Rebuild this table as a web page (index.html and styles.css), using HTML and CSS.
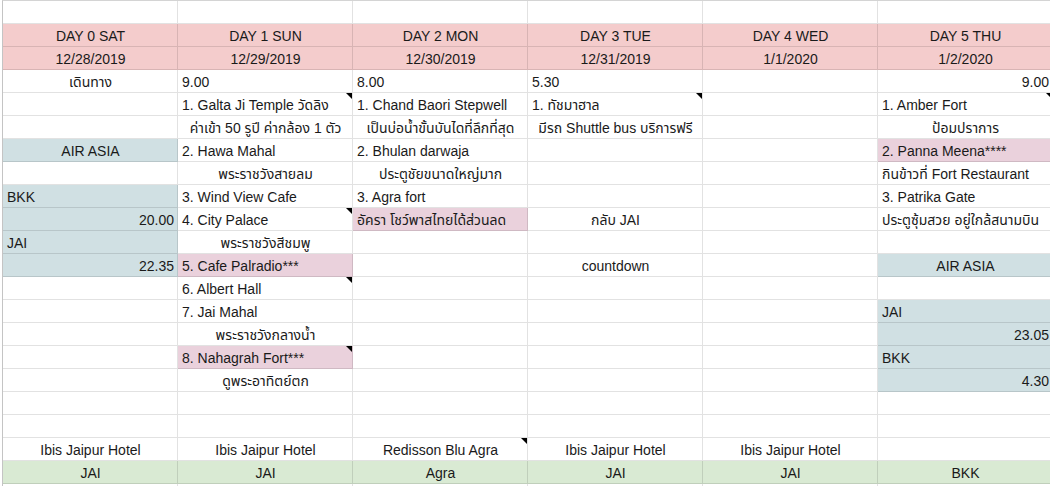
FILE: index.html
```html
<!DOCTYPE html>
<html lang="th">
<head>
<meta charset="utf-8">
<title>Trip plan</title>
<link rel="stylesheet" href="styles.css">
</head>
<body>
<div class="sheet">
  <!-- r0 -->
  <div class="c"></div><div class="c"></div><div class="c"></div><div class="c"></div><div class="c"></div><div class="c"></div>
  <!-- r1 -->
  <div class="c ctr pk">DAY 0 SAT</div><div class="c ctr pk">DAY 1 SUN</div><div class="c ctr pk">DAY 2 MON</div><div class="c ctr pk">DAY 3 TUE</div><div class="c ctr pk">DAY 4 WED</div><div class="c ctr pk">DAY 5 THU</div>
  <!-- r2 -->
  <div class="c ctr pk">12/28/2019</div><div class="c ctr pk">12/29/2019</div><div class="c ctr pk">12/30/2019</div><div class="c ctr pk">12/31/2019</div><div class="c ctr pk">1/1/2020</div><div class="c ctr pk">1/2/2020</div>
  <!-- r3 -->
  <div class="c ctr">เดินทาง</div><div class="c">9.00</div><div class="c">8.00</div><div class="c">5.30</div><div class="c"></div><div class="c r">9.00</div>
  <!-- r4 -->
  <div class="c"></div><div class="c cm">1. Galta Ji Temple วัดลิง</div><div class="c">1. Chand Baori Stepwell</div><div class="c cm">1. ทัชมาฮาล</div><div class="c"></div><div class="c cm">1. Amber Fort</div>
  <!-- r5 -->
  <div class="c"></div><div class="c ctr">ค่าเข้า 50 รูปี ค่ากล้อง 1 ตัว</div><div class="c ctr">เป็นบ่อน้ำขั้นบันไดที่ลึกที่สุด</div><div class="c ctr">มีรถ Shuttle bus บริการฟรี</div><div class="c"></div><div class="c ctr">ป้อมปราการ</div>
  <!-- r6 -->
  <div class="c ctr bl">AIR ASIA</div><div class="c">2. Hawa Mahal</div><div class="c">2. Bhulan darwaja</div><div class="c"></div><div class="c"></div><div class="c mv">2. Panna Meena****</div>
  <!-- r7 -->
  <div class="c"></div><div class="c ctr">พระราชวังสายลม</div><div class="c ctr">ประตูชัยขนาดใหญ่มาก</div><div class="c"></div><div class="c"></div><div class="c">กินข้าวที่ Fort Restaurant</div>
  <!-- r8 -->
  <div class="c bl">BKK</div><div class="c">3. Wind View Cafe</div><div class="c">3. Agra fort</div><div class="c"></div><div class="c"></div><div class="c">3. Patrika Gate</div>
  <!-- r9 -->
  <div class="c r bl">20.00</div><div class="c cm">4. City Palace</div><div class="c mv">อัครา โชว์พาสไทยได้ส่วนลด</div><div class="c ctr">กลับ JAI</div><div class="c"></div><div class="c">ประตูซุ้มสวย อยู่ใกล้สนามบิน</div>
  <!-- r10 -->
  <div class="c bl">JAI</div><div class="c ctr">พระราชวังสีชมพู</div><div class="c"></div><div class="c"></div><div class="c"></div><div class="c"></div>
  <!-- r11 -->
  <div class="c r bl">22.35</div><div class="c mv">5. Cafe Palradio***</div><div class="c"></div><div class="c ctr">countdown</div><div class="c"></div><div class="c ctr bl">AIR ASIA</div>
  <!-- r12 -->
  <div class="c"></div><div class="c cm">6. Albert Hall</div><div class="c"></div><div class="c"></div><div class="c"></div><div class="c"></div>
  <!-- r13 -->
  <div class="c"></div><div class="c">7. Jai Mahal</div><div class="c"></div><div class="c"></div><div class="c"></div><div class="c bl">JAI</div>
  <!-- r14 -->
  <div class="c"></div><div class="c ctr">พระราชวังกลางน้ำ</div><div class="c"></div><div class="c"></div><div class="c"></div><div class="c r bl">23.05</div>
  <!-- r15 -->
  <div class="c"></div><div class="c mv cm">8. Nahagrah Fort***</div><div class="c"></div><div class="c"></div><div class="c"></div><div class="c bl">BKK</div>
  <!-- r16 -->
  <div class="c"></div><div class="c ctr">ดูพระอาทิตย์ตก</div><div class="c"></div><div class="c"></div><div class="c"></div><div class="c r bl">4.30</div>
  <!-- r17 -->
  <div class="c"></div><div class="c"></div><div class="c"></div><div class="c"></div><div class="c"></div><div class="c"></div>
  <!-- r18 -->
  <div class="c"></div><div class="c"></div><div class="c"></div><div class="c"></div><div class="c"></div><div class="c"></div>
  <!-- r19 -->
  <div class="c ctr">Ibis Jaipur Hotel</div><div class="c ctr">Ibis Jaipur Hotel</div><div class="c ctr cm">Redisson Blu Agra</div><div class="c ctr">Ibis Jaipur Hotel</div><div class="c ctr">Ibis Jaipur Hotel</div><div class="c"></div>
  <!-- r20 -->
  <div class="c ctr gr">JAI</div><div class="c ctr gr">JAI</div><div class="c ctr gr">Agra</div><div class="c ctr gr">JAI</div><div class="c ctr gr">JAI</div><div class="c ctr gr">BKK</div>
  <!-- r21 -->
  <div class="c"></div><div class="c"></div><div class="c"></div><div class="c"></div><div class="c"></div><div class="c"></div>
</div>
</body>
</html>
```
FILE: styles.css
```css
html, body {
  margin: 0;
  padding: 0;
  background: #fff;
  overflow: hidden;
}
body {
  padding-left: 2px;
  width: 1050px;
  height: 486px;
  box-sizing: border-box;
  font-family: "Liberation Sans", Arial, "Noto Sans Thai", "DejaVu Sans", sans-serif;
  font-size: 14px;
  color: #1a1a1a;
}
.sheet {
  display: grid;
  grid-template-columns: repeat(6, 175px);
  grid-auto-rows: 23px;
  border-left: 1px solid #c4c4c4;
  border-top: 1px solid #d4d4d4;
  width: max-content;
}
.c {
  position: relative;
  box-sizing: border-box;
  border-right: 1px solid rgba(0, 0, 0, 0.115);
  border-bottom: 1px solid rgba(0, 0, 0, 0.115);
  display: flex;
  align-items: flex-end;
  justify-content: flex-start;
  padding: 0 3px 2px 4px;
  white-space: nowrap;
  overflow: hidden;
  line-height: 16px;
}
.ctr { justify-content: center; }
.r { justify-content: flex-end; }
.pk { background-color: #f4cccc; }
.bl { background-color: #d0e0e3; }
.mv { background-color: #ead1dc; }
.gr { background-color: #d9ead3; }
.cm::after {
  content: "";
  position: absolute;
  top: 0;
  right: 0;
  width: 0;
  height: 0;
  border-top: 6px solid #000;
  border-left: 6px solid transparent;
}
```
